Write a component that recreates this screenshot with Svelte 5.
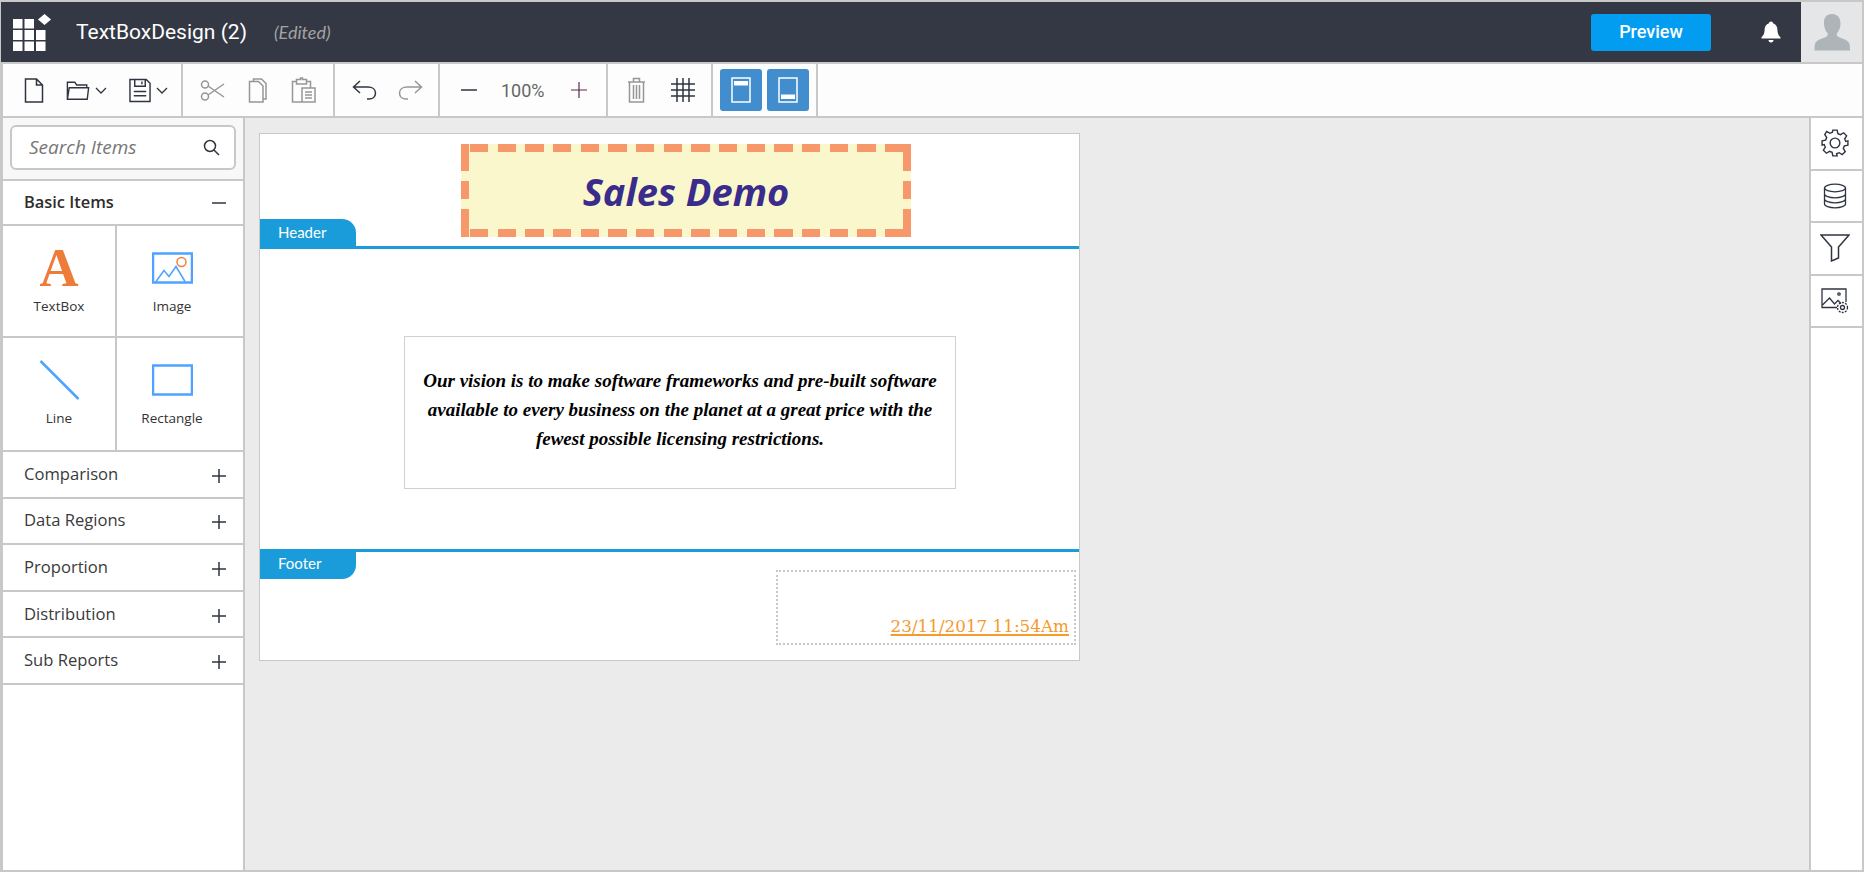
<script>
  const collapsed = ['Comparison', 'Data Regions', 'Proportion', 'Distribution', 'Sub Reports'];
</script>

<div class="app">
  <header class="topbar">
    <svg class="logo" width="40" height="38" viewBox="0 0 40 38">
      <g fill="#fff">
        <rect x="0" y="5" width="9.5" height="9.5" />
        <rect x="11.5" y="5" width="9.5" height="9.5" />
        <rect x="0" y="16" width="9.5" height="10" />
        <rect x="11.5" y="16" width="9.5" height="10" />
        <rect x="23" y="16" width="9.5" height="10" />
        <rect x="0" y="27.5" width="9.5" height="9.5" />
        <rect x="11.5" y="27.5" width="9.5" height="9.5" />
        <rect x="23" y="27.5" width="9.5" height="9.5" />
        <polygon points="31.5,0 38,5.5 31.5,11 25,5.5" />
      </g>
    </svg>
    <span class="title">TextBoxDesign (2)</span>
    <span class="edited">(Edited)</span>
    <button class="preview">Preview</button>
    <svg class="bell" width="22" height="24" viewBox="0 0 22 24">
      <path fill="#fff" d="M11 1.500c1.200 0 2 .8 2 1.800 3 .9 4.300 3.400 4.400 6.500.1 3.600 1 5.700 3.100 7.400v1.300H1.500v-1.300c2.100-1.700 3-3.800 3.100-7.400.1-3.100 1.400-5.600 4.400-6.500 0-1 .8-1.800 2-1.800zM8.500 20h5c0 1.500-1 2.500-2.500 2.500S8.500 21.500 8.500 20z" />
    </svg>
    <div class="avatar">
      <svg width="36" height="38" viewBox="0 0 36 38">
        <path fill="#adb5b9" d="M18 1c5.500 0 8.500 4 8.500 9.500 0 4-1.500 7.500-3.800 10 0 2 .6 3 3 4 4 1.500 9 3 9.800 6.500.3 1.500.5 3.500.5 6.500H.5c0-3 .2-5 .5-6.500.8-3.500 5.800-5 9.800-6.500 2.400-1 3-2 3-4-2.300-2.500-3.800-6-3.800-10C9.500 5 12.500 1 18 1z" />
      </svg>
    </div>
  </header>

  <div class="toolbar">
    <div class="group g-file">
      <svg width="20" height="25" viewBox="0 0 20 25" class="ink"><path d="M1.500 1h11l6 6v17h-17zM12.500 1v6h6" /></svg>
      <span class="combo">
        <svg width="24" height="21" viewBox="0 0 26 22" class="ink"><path d="M1.500 20.500V2h8l2 3h11v3M1.500 20.500h21.500l1.500-12.500H3.500l-2 12.500z" /></svg>
        <svg width="12" height="7" viewBox="0 0 12 7" class="ink thin"><path d="M1 1l5 5 5-5" /></svg>
      </span>
      <span class="combo">
        <svg width="22" height="25" viewBox="0 0 23 25" class="ink"><path d="M1 1h17l4 4v19H1zM6 1v7h11V1M13.500 3v3M5 13.500h13M5 18h13" /></svg>
        <svg width="12" height="7" viewBox="0 0 12 7" class="ink thin"><path d="M1 1l5 5 5-5" /></svg>
      </span>
    </div>
    <div class="group g-edit">
      <svg width="25" height="21" viewBox="0 0 25 21" class="mute"><circle cx="5" cy="4.500" r="3.500" /><circle cx="5" cy="16.500" r="3.500" /><path d="M8 6l16 11M8 15L24 4" /></svg>
      <svg width="20" height="25" viewBox="0 0 20 25" class="mute"><path d="M5.500 3.500V1h8l4.500 4.500V21h-2.500M1.500 3.500h9l4.500 4.500V24H1.500z" /></svg>
      <svg width="25" height="26" viewBox="0 0 25 26" class="mute"><path d="M14 25H1.500V4.500h4V2.500h4V1h2v1.500h4v2h4v6M5.500 4.500V7h10V4.500M11 11h13v14H11zM14 15h7M14 18h7M14 21h7" /></svg>
    </div>
    <div class="group g-undo">
      <svg width="25" height="20" viewBox="0 0 25 20" class="ink"><path d="M8 1L1.500 7 8 13M1.500 7H16c4 0 7.500 2 7.500 6s-3 6-6.500 6h-2" /></svg>
      <svg width="25" height="20" viewBox="0 0 25 20" class="mute"><path d="M17 1l6.500 6L17 13M23.500 7H9C5 7 1.500 9 1.500 13s3 6 6.500 6h2" /></svg>
    </div>
    <div class="group g-zoom">
      <svg width="18" height="18" viewBox="0 0 18 18" class="ink"><path d="M1 9h16" /></svg>
      <span class="pct">100%</span>
      <svg width="18" height="18" viewBox="0 0 18 18" class="plus"><path d="M1 9h16M9 1v16" /></svg>
    </div>
    <div class="group g-misc">
      <svg width="19" height="26" viewBox="0 0 19 26" class="mute"><path d="M1 5h17M6.500 5V1.500h6V5M2.500 5v20h14V5M6.500 8v14M9.500 8v14M12.500 8v14" /></svg>
      <svg width="24" height="24" viewBox="0 0 24 24" class="ink"><path d="M0 6h24M0 12h24M0 18h24M6 0v24M12 0v24M18 0v24" /></svg>
    </div>
    <div class="group g-views">
      <button class="view" aria-label="Header view">
        <svg width="20" height="26" viewBox="0 0 20 26"><rect x="1" y="1" width="18" height="24" fill="none" stroke="#fff" stroke-width="1.500" /><rect x="3" y="4" width="14" height="4.500" fill="#fff" /></svg>
      </button>
      <button class="view" aria-label="Footer view">
        <svg width="20" height="26" viewBox="0 0 20 26"><rect x="1" y="1" width="18" height="24" fill="none" stroke="#fff" stroke-width="1.500" /><rect x="3" y="17.500" width="14" height="4.500" fill="#fff" /></svg>
      </button>
    </div>
  </div>

  <div class="main">
    <aside class="sidebar">
      <div class="search-wrap">
        <div class="search">
          <span>Search Items</span>
          <svg width="17" height="17" viewBox="0 0 17 17" class="ink"><circle cx="7" cy="7" r="5.500" /><path d="M11 11l5 5" /></svg>
        </div>
      </div>
      <div class="row basic"><strong>Basic Items</strong><svg width="14" height="14" viewBox="0 0 14 14" class="ink"><path d="M0 7h14" /></svg></div>
      <div class="items">
        <div class="item">
          <span class="big-a">A</span>
          <span>TextBox</span>
        </div>
        <div class="item">
          <svg width="41" height="31" viewBox="0 0 41 31" class="blue"><rect x="1" y="1" width="39" height="29" /><path d="M4 29l8-11 5 6 7-10 9 15" stroke-width="1.500" /><circle cx="29.500" cy="9.500" r="4.500" stroke="#f0803c" stroke-width="1.500" /></svg>
          <span>Image</span>
        </div>
        <div class="item">
          <svg width="41" height="41" viewBox="0 0 41 41" class="blue"><path d="M1.500 1.500l38 38" /></svg>
          <span>Line</span>
        </div>
        <div class="item">
          <svg width="41" height="31" viewBox="0 0 41 31" class="blue"><rect x="1" y="1" width="39" height="29" /></svg>
          <span>Rectangle</span>
        </div>
      </div>
      {#each collapsed as name}
        <div class="row">
          <span>{name}</span>
          <svg width="14" height="14" viewBox="0 0 14 14" class="ink"><path d="M0 7h14M7 0v14" /></svg>
        </div>
      {/each}
    </aside>

    <section class="canvas">
      <div class="page">
        <div class="band band-header">
          <div class="sales">Sales Demo</div>
          <span class="tab tab-top">Header</span>
        </div>
        <div class="band band-body">
          <p class="vision">Our vision is to make software frameworks and pre-built software available to every business on the planet at a great price with the fewest possible licensing restrictions.</p>
        </div>
        <div class="band band-footer">
          <span class="tab tab-bottom">Footer</span>
          <div class="stamp"><u>23/11/2017 11:54Am</u></div>
        </div>
      </div>
    </section>

    <aside class="rail">
      <div class="rail-btn">
        <svg width="28" height="28" viewBox="0 0 26 26" class="ink thin"><circle cx="13" cy="13" r="4.500" /><path d="M11 1h4l.7 3.300 2.400 1 2.900-1.800 2.800 2.800-1.800 2.900 1 2.400L25 11v4l-3.300.7-1 2.400 1.800 2.900-2.800 2.800-2.900-1.800-2.400 1L15 25h-4l-.7-3.300-2.400-1-2.900 1.800-2.800-2.800 1.800-2.900-1-2.400L1 15v-4l3.300-.7 1-2.400-1.800-2.900L5.300 2.200l2.900 1.800 2.400-1z" /></svg>
      </div>
      <div class="rail-btn">
        <svg width="24" height="26" viewBox="0 0 24 26" class="ink thin"><ellipse cx="12" cy="5" rx="10.500" ry="3.800" /><path d="M1.500 5v16c0 2 4.700 3.800 10.500 3.800S22.500 23 22.500 21V5M1.500 11c0 2 4.700 3.800 10.500 3.800S22.500 13 22.500 11M1.500 16c0 2 4.700 3.800 10.500 3.800S22.500 18 22.500 16" /></svg>
      </div>
      <div class="rail-btn">
        <svg width="30" height="28" viewBox="0 0 30 28" class="ink"><path d="M1 1h28L18.500 13v11l-7 3V13z" /></svg>
      </div>
      <div class="rail-btn">
        <svg width="28" height="26" viewBox="0 0 28 26" class="ink thin"><path d="M16 19.500H1V1h24v13M1.500 17l7-7 5 6 3.500-3.500 3 3" /><circle cx="18" cy="6" r="1.200" /><circle cx="21.500" cy="19.500" r="2" /><circle cx="21.500" cy="19.500" r="5" stroke-dasharray="2 1.200" /></svg>
      </div>
    </aside>
  </div>
</div>

<style>
  :global(body) {
    margin: 0;
    background: #fff;
  }

  .app {
    width: 1864px;
    height: 872px;
    box-sizing: border-box;
    display: flex;
    flex-direction: column;
    border-top: 2px solid #c8c8c8;
    border-bottom: 2px solid #c8c8c8;
    border-left: 1px solid #c8c8c8;
    border-right: 2px solid #c8c8c8;
    font-family: "Open Sans", sans-serif;
    color: #333;
    background: #c8c8c8;
    overflow: hidden;
  }

  svg {
    display: block;
    flex: none;
  }

  .ink, .mute, .plus, .blue {
    fill: none;
    stroke-width: 1.5;
  }
  .ink { stroke: #2f3440; }
  .mute { stroke: #969696; }
  .plus { stroke: #5a2a48; stroke-width: 1.2; }
  .thin { stroke-width: 1.3; }
  .blue { stroke: #4da3ff; stroke-width: 2.5; }

  .topbar {
    height: 60px;
    flex: none;
    display: flex;
    align-items: center;
    background: #343844;
  }

  .logo {
    margin: 0 0 0 12px;
    position: relative;
    top: 1px;
  }

  .title {
    margin-left: 23px;
    font: 400 21px Roboto, sans-serif;
    color: #fff;
  }

  .edited {
    margin-left: 27px;
    font: italic 400 18px Lato, sans-serif;
    color: #a3a3a3;
  }

  .preview {
    margin-left: auto;
    width: 120px;
    height: 37px;
    padding: 0 0 2px;
    border: none;
    border-radius: 3px;
    background: #029cf0;
    color: #fff;
    font: 500 18px Roboto, sans-serif;
  }

  .bell {
    margin-left: 49px;
  }

  .avatar {
    width: 61px;
    height: 60px;
    margin-left: 19px;
    background: #e4e6e8;
    display: flex;
    justify-content: center;
    align-items: flex-end;
    padding-bottom: 11px;
    box-sizing: border-box;
  }

  .toolbar {
    height: 52px;
    flex: none;
    margin-top: 2px;
    margin-left: 2px;
    display: flex;
    background: #fdfdfd;
    border-bottom: 2px solid #c8c8c8;
    box-sizing: content-box;
  }

  .group {
    display: flex;
    align-items: center;
    box-sizing: border-box;
    border-right: 2px solid #c8c8c8;
  }

  .combo {
    display: flex;
    align-items: center;
    gap: 5px;
  }

  .g-file { width: 180px; padding-left: 21px; gap: 22px; }
  .g-edit { width: 152px; padding-left: 17px; gap: 23px; }
  .g-undo { width: 105px; padding-left: 17px; gap: 21px; }
  .g-zoom { width: 168px; padding-left: 20px; gap: 23px; }
  .g-misc { width: 105px; padding-left: 19px; gap: 25px; }
  .g-views { width: 105px; padding-left: 7px; gap: 5px; }

  .pct {
    width: 46px;
    font: 400 18px Roboto, sans-serif;
    color: #666;
  }

  .view {
    width: 42px;
    height: 42px;
    padding: 0;
    border: none;
    border-radius: 3px;
    background: #418dce;
    display: flex;
    align-items: center;
    justify-content: center;
  }

  .main {
    flex: 1;
    min-height: 0;
    display: flex;
    margin-left: 2px;
    background: #ebebeb;
  }

  .sidebar {
    width: 240px;
    flex: none;
    box-sizing: content-box;
    background: #fff;
    border-right: 2px solid #c8c8c8;
  }

  .search-wrap {
    height: 63px;
    box-sizing: border-box;
    padding: 7px 7px 0;
    background: #f8f8f8;
    border-bottom: 2px solid #c8c8c8;
  }

  .search {
    height: 45px;
    box-sizing: border-box;
    padding: 0 14px 0 17px;
    display: flex;
    align-items: center;
    justify-content: space-between;
    background: #fff;
    border: 2px solid #c8c8c8;
    border-radius: 6px;
    font: italic 400 19px "Open Sans", sans-serif;
    color: #777;
  }

  .search span {
    position: relative;
    top: -1px;
  }

  .row {
    height: 46.6px;
    box-sizing: border-box;
    padding: 0 17px 2px 21px;
    display: flex;
    align-items: center;
    justify-content: space-between;
    border-bottom: 2px solid #c8c8c8;
    font-size: 16.6px;
    color: #3a3a3a;
  }

  .row svg {
    margin-top: 5px;
  }

  .basic {
    height: 45px;
    font-size: 16.4px;
  }

  .basic svg {
    margin-top: 2px;
  }

  .basic strong {
    font-weight: 600;
    color: #2d2d2d;
  }

  .items {
    display: grid;
    grid-template-columns: 112px 126px;
    column-gap: 2px;
    grid-template-rows: 110px 112px;
    row-gap: 2px;
    background: #c8c8c8;
    padding-bottom: 2px;
  }

  .item {
    background: #fff;
    display: flex;
    flex-direction: column;
    align-items: center;
    font-size: 13.5px;
    color: #333;
  }

  .item:nth-child(even) {
    padding-right: 16px;
  }

  .item svg, .big-a {
    height: 42px;
    margin-top: 21px;
    margin-bottom: 8px;
  }

  .big-a {
    font: 700 54px/42px "Liberation Serif", serif;
    color: #ee7b38;
  }

  .canvas {
    flex: 1;
    padding: 15px 0 0 14px;
  }

  .page {
    width: 821px;
    height: 528px;
    box-sizing: border-box;
    display: flex;
    flex-direction: column;
    background: #fff;
    border: 1px solid #c8c8c8;
  }

  .band {
    position: relative;
  }

  .band-header {
    height: 115px;
    flex: none;
    box-sizing: border-box;
    padding: 10px 0 0 201px;
    border-bottom: 3px solid #199cd9;
  }

  /* dash lengths differ from the browser's own dashed border, so they are painted */
  .sales {
    width: 450px;
    height: 93px;
    display: flex;
    align-items: center;
    justify-content: center;
    background:
      repeating-linear-gradient(90deg, #f7986a 0 18.4px, transparent 0 27.67px) 8.5px 0 / 100% 8px no-repeat,
      repeating-linear-gradient(90deg, #f7986a 0 18.4px, transparent 0 27.67px) 8.5px 100% / 100% 8px no-repeat,
      linear-gradient(180deg, #f7986a 0 26.7px, transparent 0 36.7px, #f7986a 0 55.4px, transparent 0 65.4px, #f7986a 0) 0 0 / 8px 100% no-repeat,
      linear-gradient(180deg, #f7986a 0 26.7px, transparent 0 36.7px, #f7986a 0 55.4px, transparent 0 65.4px, #f7986a 0) 100% 0 / 8px 100% no-repeat,
      #fbf7cd;
    font: italic 700 38px "Open Sans", sans-serif;
    color: #3a2c8c;
  }

  .tab {
    position: absolute;
    left: 0;
    width: 96px;
    height: 27px;
    box-sizing: border-box;
    padding-left: 18px;
    background: #199cd9;
    color: #fff;
    font: 400 15px/27px Lato, sans-serif;
  }

  .tab-top {
    bottom: 0;
    border-top-right-radius: 14px;
  }

  .tab-bottom {
    top: 0;
    line-height: 22px;
    border-bottom-right-radius: 14px;
  }

  .band-body {
    height: 303px;
    flex: none;
    box-sizing: border-box;
    padding: 87px 0 0 144px;
    border-bottom: 3px solid #199cd9;
  }

  .vision {
    width: 552px;
    height: 153px;
    margin: 0;
    box-sizing: border-box;
    padding: 29px 10px 0;
    border: 1px solid #d0d0d0;
    text-align: center;
    font: italic 700 19px/29px "Liberation Serif", serif;
    color: #000;
  }

  .band-footer {
    flex: 1;
    padding: 18px 3px 0 0;
    display: flex;
    justify-content: flex-end;
  }

  .stamp {
    width: 300px;
    height: 75px;
    box-sizing: border-box;
    padding: 0 5px 6px 0;
    display: flex;
    align-items: flex-end;
    justify-content: flex-end;
    border: 2px dotted #c8c8c8;
    font: 400 16.8px/22px "DejaVu Serif", serif;
    color: #f59a2c;
  }

  .stamp u {
    text-decoration-thickness: 2px;
    text-underline-offset: 2px;
  }

  .rail {
    width: 51px;
    margin-left: auto;
    flex: none;
    background: #fff;
    border-left: 2px solid #c8c8c8;
  }

  .rail-btn {
    height: 52.5px;
    box-sizing: border-box;
    padding-right: 3px;
    display: flex;
    align-items: center;
    justify-content: center;
    border-bottom: 2px solid #c8c8c8;
  }
</style>
